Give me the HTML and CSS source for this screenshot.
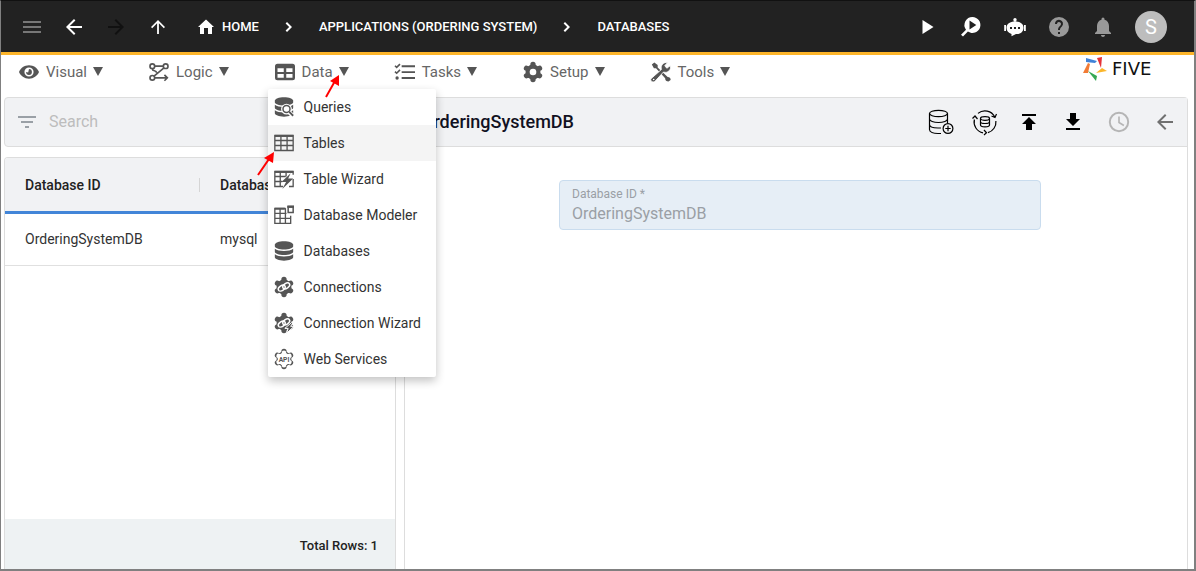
FILE: index.html
```html
<!DOCTYPE html>
<html lang="en">
<head>
<meta charset="utf-8">
<meta name="viewport" content="width=device-width, initial-scale=1">
<title>Databases</title>
<link rel="stylesheet" href="styles.css">
</head>
<body>
<svg class="defs" aria-hidden="true">
  <defs>
    <g id="gear"><circle cx="12" cy="12" r="9"/><path d="M12 3v18M4.200 7.500l15.600 9M19.800 7.500l-15.600 9" stroke="currentColor" stroke-width="6.400" stroke-linecap="round"/></g>
    <g id="cyl"><path d="M1 4.600C1 2.400 6 .4 12 .4s11 2 11 4.200v1.600c0 2.200-4.900 4-11 4S1 8.400 1 6.200z"/><path d="M1 9.300c2.200 1.900 6.200 2.700 11 2.700s8.800-.8 11-2.700v3.500c0 2.200-4.900 4-11 4S1 15 1 12.800z"/><path d="M1 15.900c2.200 1.900 6.200 2.700 11 2.700s8.800-.8 11-2.700v3.700c0 2.200-4.900 4-11 4s-11-1.800-11-4z"/></g>
    <g id="link" fill="none" stroke="#fff" stroke-width="1.700"><ellipse cx="9.300" cy="13.300" rx="4.600" ry="2.900" transform="rotate(-35 9.300 13.300)"/><ellipse cx="14.700" cy="10.700" rx="4.600" ry="2.900" transform="rotate(-35 14.700 10.700)"/></g>
    <path id="back" d="M20 11H7.830l5.590-5.590L12 4l-8 8 8 8 1.410-1.410L7.830 13H20z"/>
    <path id="chevron" d="M10 7L8.600 8.400l3.600 3.600-3.600 3.600L10 17l5-5z"/>
  </defs>
</svg>
<div class="app">
  <header class="topbar">
    <button class="icon-btn dim" aria-label="Menu"><svg viewBox="0 0 24 24"><path d="M3 6h18v2H3zM3 11h18v2H3zM3 16h18v2H3z"/></svg></button>
    <button class="icon-btn" aria-label="Back"><svg viewBox="0 0 24 24"><use href="#back"/></svg></button>
    <button class="icon-btn disabled" aria-label="Forward" disabled><svg viewBox="0 0 24 24"><path d="M12 4l-1.410 1.410L16.170 11H4v2h12.170l-5.580 5.590L12 20l8-8z"/></svg></button>
    <button class="icon-btn" aria-label="Up"><svg viewBox="0 0 24 24"><path d="M5 12l1.200 1.200 4.900-4.900V19h1.800V8.300l4.900 4.900L19 12l-7-7z"/></svg></button>
    <nav class="crumbs" aria-label="Breadcrumb">
      <a class="home" href="#"><svg viewBox="0 0 24 24"><path d="M10 19v-6h4v6h4v-7h2L12 4.500 4 12h2v7z"/></svg>HOME</a>
      <svg viewBox="0 0 24 24"><use href="#chevron"/></svg>
      <a href="#">APPLICATIONS (ORDERING SYSTEM)</a>
      <svg viewBox="0 0 24 24"><use href="#chevron"/></svg>
      <a href="#">DATABASES</a>
    </nav>
    <div class="top-actions">
      <button class="icon-btn" aria-label="Run"><svg viewBox="0 0 24 24"><path d="M7.500 5v14l11-7z"/></svg></button>
      <button class="icon-btn" aria-label="Inspect"><svg viewBox="0 0 24 24"><path fill-rule="evenodd" d="M13.500 2a8 8 0 1 1-4.600 14.600L4 21.500 2 19.700l5-5A8 8 0 0 1 13.500 2zM10.500 5.500v9l6.800-4.500z"/></svg></button>
      <button class="icon-btn" aria-label="Assistant"><svg viewBox="0 0 24 24"><circle cx="12" cy="4.800" r="1.700"/><path d="M11.400 5h1.200v3h-1.200z"/><path d="M1.200 10h1.800v6H1.200zM21 10h1.800v6H21z"/><path fill-rule="evenodd" d="M12 6.500c5.500 0 8.500 2.500 8.500 6.200S18 19 14 19h-1l-4.500 2.200V19C5.500 18 3.500 16 3.500 12.700c0-3.700 3.500-6.200 8.500-6.200zM7 12v2h2v-2zm4 0v2h2v-2zm4 0v2h2v-2z"/></svg></button>
      <button class="icon-btn muted" aria-label="Help"><svg viewBox="0 0 24 24"><path d="M12 2a10 10 0 1 0 0 20 10 10 0 0 0 0-20zm1 17h-2v-2h2zm2.070-7.750-.9.920C13.450 12.900 13 13.500 13 15h-2v-.5c0-1.100.45-2.100 1.170-2.830l1.240-1.260A2 2 0 1 0 10 9H8a4 4 0 1 1 7.070 2.250z"/></svg></button>
      <button class="icon-btn muted" aria-label="Notifications"><svg viewBox="0 0 24 24"><path d="M12 22c1.100 0 2-.9 2-2h-4c0 1.100.9 2 2 2zm6-6v-5c0-3.070-1.640-5.640-4.500-6.320V4a1.500 1.500 0 0 0-3 0v.68C7.630 5.360 6 7.920 6 11v5l-2 2v1h16v-1z"/></svg></button>
      <button class="avatar" aria-label="Account">S</button>
    </div>
  </header>

  <nav class="menubar" aria-label="Main">
    <div class="menu"><button class="menu-btn"><svg viewBox="0 0 24 24"><path fill-rule="evenodd" d="M12 4C6.500 4 2 7.300 0 12c2 4.700 6.500 8 12 8s10-3.300 12-8c-2-4.700-6.500-8-12-8zm0 2.500a5.500 5.500 0 1 1 0 11 5.500 5.500 0 0 1 0-11z"/><path d="M12 8.500A3.500 3.500 0 1 1 8.500 12l2.500.5z"/></svg><span>Visual</span><i class="caret"></i></button></div>
    <div class="menu"><button class="menu-btn"><svg viewBox="0 0 24 24" fill="none" stroke="currentColor" stroke-width="2"><circle cx="4" cy="5" r="2.800"/><circle cx="20" cy="5" r="2.800"/><circle cx="4" cy="19" r="2.800"/><path d="M7 5h10M18 7L6 17M4 8c0 4 5 1 5 5M7 19h14M18.500 15.500L22 19l-3.500 3.500"/></svg><span>Logic</span><i class="caret"></i></button></div>
    <div class="menu"><button class="menu-btn" aria-expanded="true"><svg viewBox="0 0 24 24"><path fill-rule="evenodd" d="M3 2h18a3 3 0 0 1 3 3v14a3 3 0 0 1-3 3H3a3 3 0 0 1-3-3V5a3 3 0 0 1 3-3zM3 7.500v4.500h7.500V7.500zm10.500 0v4.500H21V7.500zM3 14.500V19h7.500v-4.500zm10.500 0V19H21v-4.500z"/></svg><span>Data</span><i class="caret"></i></button>
      <div class="dropdown" role="menu">
        <button role="menuitem"><svg viewBox="0 0 24 24"><use href="#cyl"/><circle cx="15" cy="14.500" r="6.500" fill="#fff"/><circle cx="15" cy="14.500" r="4.200" fill="none" stroke="currentColor" stroke-width="1.800"/><path d="M18 18l5 5" stroke="#fff" stroke-width="5"/><path d="M18 17.500l5 5" stroke="currentColor" stroke-width="2.200"/></svg>Queries</button>
        <button role="menuitem" class="active"><svg viewBox="0 0 24 24" fill="none" stroke="currentColor"><path stroke-width="1.600" d="M1 3h22v18H1zM1 9h22M1 15h22M8.300 4v17M15.700 4v17"/><path stroke-width="2.500" d="M1 3.500h22"/></svg>Tables</button>
        <button role="menuitem"><svg viewBox="0 0 24 24"><path fill="none" stroke="currentColor" stroke-width="1.600" d="M11 21H1V3h22v4M1 9h13M1 15h9M7.500 4v17M14.500 4v5M18 21h5v-9"/><path stroke="currentColor" stroke-width="2.500" d="M1 3.500h22"/><path d="M20 5L9 15.500h5.500L10 24l13-12.500h-6z"/></svg>Table Wizard</button>
        <button role="menuitem"><svg viewBox="0 0 24 24" fill="none" stroke="currentColor"><path stroke-width="1.600" d="M14 4H1v18h19v-9M1 10h14M1 16h19M7.300 4v18M13.700 4v18"/><path stroke-width="2.400" d="M1 4.500h12"/><path stroke-width="1.800" d="M17 2h6v7h-6z"/><path stroke-width="3" d="M16 2h8"/></svg>Database Modeler</button>
        <button role="menuitem"><svg viewBox="0 0 24 24"><use href="#cyl"/></svg>Databases</button>
        <button role="menuitem"><svg viewBox="0 0 24 24"><use href="#gear"/><use href="#link"/></svg>Connections</button>
        <button role="menuitem"><svg viewBox="0 0 24 24"><use href="#gear"/><use href="#link"/><path d="M21 11.500l-8 7h4l-2 6 9-8.500h-4l3-4.500z" stroke="#fff" stroke-width="1.200"/></svg>Connection Wizard</button>
        <button role="menuitem"><svg viewBox="0 0 24 24"><use href="#gear"/><g class="gear-face"><use href="#gear"/></g><text class="api" x="12" y="15" text-anchor="middle">API</text></svg>Web Services</button>
      </div>
    </div>
    <div class="menu"><button class="menu-btn"><svg viewBox="0 0 24 24"><path d="M8 4h16v2.300H8zM8 11h16v2.300H8zM8 18h16v2.300H8z"/><path fill="none" stroke="currentColor" stroke-width="1.900" d="M0 4.500l2 2 4-4M0 11.500l2 2 4-4"/><circle cx="2.500" cy="19.200" r="2"/></svg><span>Tasks</span><i class="caret"></i></button></div>
    <div class="menu"><button class="menu-btn"><svg viewBox="0 0 24 24"><use href="#gear"/><circle cx="12" cy="12" r="4" fill="#fff"/></svg><span>Setup</span><i class="caret"></i></button></div>
    <div class="menu"><button class="menu-btn"><svg viewBox="0 0 24 24"><path d="M1 3l3-2.500 4 3v3l12 11.500c2.500 0 4 2 3.500 3.500L21 23.500c-2.500 0-4-1.500-4-4L6 7.500H3.500z"/><path stroke="#fff" stroke-width="1" d="M0 20L12.500 9C11 4 15 0 20 .5l-3.500 4L19 7.500l4-3C25 9 20 14 15 12L4.500 23.500C2 25-1.500 22 0 20z"/><circle cx="3.200" cy="21" r="1" fill="#fff"/></svg><span>Tools</span><i class="caret"></i></button></div>
    <a class="logo" href="#" aria-label="Five"><svg viewBox="0 0 24 24"><path fill="#3f82d8" d="M3 1l11 3-2 2-9-1z"/><path fill="#e53338" d="M14 1l5-1-1 11z"/><path fill="#f27b35" d="M5 6l2 1-2 9H0z"/><path fill="#fbb62b" d="M24 14l-11 2 6-5z"/><path fill="#36a853" d="M5 14l9 5-1 5z"/></svg><span>FIVE</span></a>
  </nav>

  <main class="content">
    <section class="side">
      <label class="search"><svg viewBox="0 0 24 24"><path d="M3 6h18v2H3zM6 11h12v2H6zM10 16h4v2h-4z"/></svg><input type="search" placeholder="Search" aria-label="Search"></label>
      <div class="list">
        <table>
          <thead><tr><th class="id-col">Database ID</th><th>Database Type</th></tr></thead>
          <tbody><tr><td>OrderingSystemDB</td><td>mysql</td></tr></tbody>
        </table>
        <div class="total">Total Rows: 1</div>
      </div>
    </section>
    <section class="detail">
      <header class="detail-head">
        <h1>OrderingSystemDB</h1>
        <div class="detail-actions">
          <button class="icon-btn" aria-label="Add database"><svg viewBox="0 0 24 24" fill="none" stroke="currentColor" stroke-width="1.200"><ellipse cx="9.500" cy="3.500" rx="9" ry="3.200"/><path d="M.5 3.500v16c0 2.500 4 4 8.500 4h3M18.500 3.500v10M.5 9c0 2 4 3.500 9 3.500s9-1.500 9-3.500M.5 14.500C.5 16.500 4 18 9 18h3"/><circle cx="19" cy="18.500" r="4.900"/><path d="M19 15.800v5.400M16.300 18.500h5.400"/></svg></button>
          <button class="icon-btn" aria-label="Refresh database"><svg viewBox="0 0 24 24" fill="none" stroke="currentColor" stroke-width="1.200"><path d="M5 3.400A11 11 0 0 1 21.800 7M1.400 9.500A11 11 0 0 0 10 22.800M15 22.600A11 11 0 0 0 22.900 11M23.500 4l-1.500 3.500L18.500 6M-.5 8.500L2 6l2.500 3M11 20l2.500 2.800-2.500 2.200"/><ellipse cx="12" cy="8.500" rx="4.500" ry="1.800"/><path d="M7.500 8.500v6.500c0 2.500 9 2.500 9 0V8.500M7.500 11.700c0 2.400 9 2.400 9 0"/></svg></button>
          <button class="icon-btn" aria-label="Upload"><svg viewBox="0 0 24 24"><path d="M5 4h14v2H5zM5 14h4v6h6v-6h4l-7-7z"/></svg></button>
          <button class="icon-btn" aria-label="Download"><svg viewBox="0 0 24 24"><path d="M19 9h-4V3H9v6H5l7 7zM5 18v2h14v-2z"/></svg></button>
          <button class="icon-btn faint" aria-label="History"><svg viewBox="0 0 24 24"><path fill="none" stroke="currentColor" stroke-width="1.800" d="M12 3.500a8.500 8.500 0 1 0 0 17 8.500 8.500 0 0 0 0-17z"/><path fill="none" stroke="currentColor" stroke-width="1.500" d="M12 7v5.500l4.500 2.700"/></svg></button>
          <button class="icon-btn grey" aria-label="Close"><svg viewBox="0 0 24 24"><use href="#back"/></svg></button>
        </div>
      </header>
      <form class="form">
        <div class="field"><label for="db">Database ID *</label><input id="db" value="OrderingSystemDB" disabled></div>
      </form>
    </section>
  </main>

  <svg class="pointer pointer-menu" viewBox="0 0 18 24"><path d="M1 22L10 6" stroke="red" stroke-width="2"/><path fill="red" d="M14 0v11L5 6z"/></svg>
  <svg class="pointer pointer-item" viewBox="0 0 18 24"><path d="M1 23L12 7" stroke="red" stroke-width="2"/><path fill="red" d="M17 0l-1 11-9-5z"/></svg>
</div>
</body>
</html>
```
FILE: styles.css
```css
* { box-sizing: border-box; }
body { margin: 0; background: #fff; color: #333; font: 14px/20px Roboto, sans-serif; }
button, input { font: inherit; color: inherit; }
button { border: 0; padding: 0; background: none; cursor: pointer; }
a { color: inherit; text-decoration: none; }
svg { display: block; flex: none; width: 24px; height: 24px; fill: currentColor; overflow: visible; }
svg[fill="none"] { fill: none; }
.defs { position: absolute; width: 0; height: 0; }

.app {
  position: relative;
  display: flex;
  flex-direction: column;
  height: 100vh;
  border: solid #808080;
  border-width: 1px 2px 2px 1px;
  border-top-color: #111;
}

.topbar {
  flex: none;
  display: flex;
  align-items: center;
  gap: 18px;
  height: 54px;
  padding: 0 27px 0 19px;
  border-bottom: 3px solid #fdb52a;
  background: #222;
  color: #fff;
}
.icon-btn { display: flex; justify-content: center; width: 24px; }
.dim { color: #777; }
.disabled { color: #111; }
.muted { color: #999; }
.crumbs { display: flex; align-items: center; gap: 18px; padding-left: 6px; font-size: 13px; font-weight: 500; line-height: 22px; white-space: nowrap; }
.home { display: flex; align-items: center; gap: 4px; }
.top-actions { display: flex; align-items: center; gap: 20px; margin-left: auto; }
.avatar { width: 32px; height: 32px; border-radius: 50%; background: #bdbdbd; font-size: 20px; }

.menubar { flex: none; display: flex; gap: 46px; height: 42px; padding: 0 24px 0 18px; color: #666; }
.menu { position: relative; }
.menu-btn { display: flex; align-items: center; height: 33px; font-size: 15px; }
.menu-btn svg { width: 20px; height: 20px; margin-right: 7px; color: #555; }
.caret { margin-left: 6px; border: 5px solid transparent; border-top: 9px solid #555; border-bottom: 0; }
.dropdown {
  position: absolute;
  z-index: 2;
  top: 34px;
  left: -7px;
  width: 168px;
  border-radius: 2px;
  background: #fff;
  color: #333;
  box-shadow: 0 4px 10px rgba(0, 0, 0, .24);
}
.dropdown button { display: flex; align-items: center; gap: 10px; width: 100%; height: 36px; padding: 0 6px; font-size: 14px; white-space: nowrap; }
.dropdown svg { width: 20px; height: 20px; color: #555; }
.dropdown .active { background: #f4f4f4; }
.gear-face { color: #fff; fill: #fff; transform: translate(12px, 12px) scale(.84) translate(-12px, -12px); }
.api { font-size: 8px; font-weight: 700; }
.logo { display: flex; align-items: flex-start; gap: 5px; width: 87px; margin-left: auto; padding-top: 2px; color: #111; font: 18px/24px "DejaVu Sans", sans-serif; }

.content { flex: 1; min-height: 0; display: grid; grid-template-columns: 1fr 2fr; gap: 8px; padding: 0 6px 0 3px; }
.side { display: flex; flex-direction: column; gap: 10px; min-width: 0; }
.search { display: flex; align-items: center; gap: 10px; height: 50px; padding: 0 10px; border: 1px solid #ddd; border-radius: 4px; background: #f1f2f4; color: #9aa0a6; }
.search input { flex: 1; min-width: 0; padding: 0; border: 0; outline: 0; background: none; font-size: 16px; }
.search input::placeholder { color: #bdbdbd; }
.list { flex: 1; display: flex; flex-direction: column; border: 1px solid #ddd; border-bottom: 0; border-radius: 4px 4px 0 0; overflow: hidden; }
table { width: 100%; border-collapse: separate; border-spacing: 0; table-layout: fixed; text-align: left; }
th, td { padding: 0 20px; }
th { height: 56px; border-bottom: 3px solid #4285d8; background: #f1f2f4; color: #222; font-weight: 500; }
.id-col { width: 50%; background: linear-gradient(#d5d5d5, #d5d5d5) right center / 1px 14px no-repeat #f1f2f4; }
td { height: 52px; padding-bottom: 2px; border-bottom: 1px solid #e0e0e0; }
.total { margin-top: auto; height: 50px; padding: 0 17px; background: #eef2f3; font-size: 13px; font-weight: 500; line-height: 54px; text-align: right; color: #222; }

.detail { min-width: 0; border: 1px solid #ddd; border-bottom: 0; border-radius: 4px 4px 0 0; }
.detail-head { display: flex; align-items: center; justify-content: space-between; height: 49px; padding: 0 10px 0 16px; border-bottom: 1px solid #ddd; background: #f1f2f4; }
h1 { margin: 0; color: #112; font-size: 18px; font-weight: 500; }
.detail-actions { display: flex; align-items: center; gap: 20px; color: #000; }
.faint { width: 28px; color: #b5b5b5; }
.faint svg { width: 26px; height: 26px; }
.grey { color: #707070; }
.form { padding: 33px 146px 0 154px; }
.field { display: flex; flex-direction: column; height: 50px; padding: 5px 12px; border: 1px solid #c9dcee; border-radius: 4px; background: #e6eef6; color: #9a9fa5; }
.field label { font-size: 12px; line-height: 16px; }
.field input { width: 100%; height: 24px; padding: 0; border: 0; background: none; font-size: 16px; line-height: 24px; }

.pointer { position: absolute; z-index: 3; width: 18px; height: 24px; }
.pointer-menu { top: 74px; left: 324px; }
.pointer-item { top: 151px; left: 256px; }
```
